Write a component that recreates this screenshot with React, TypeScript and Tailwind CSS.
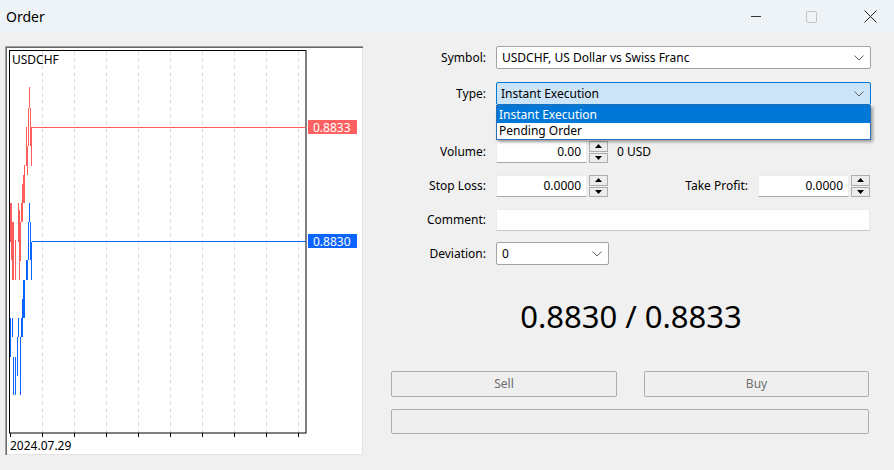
import React from "react";

const redBars: [number, number, number][] = [
  [29.5, 87, 108],
  [28.5, 108, 146],
  [30.5, 108, 146],
  [31.5, 127, 166],
  [26.5, 127, 166],
  [27.5, 146, 175],
  [24.5, 165, 203],
  [23.5, 175, 203],
  [22.5, 184, 222],
  [10.5, 203, 242],
  [11.5, 203, 260],
  [12.5, 222, 280],
  [13.5, 222, 280],
  [15.5, 240, 280],
  [18.5, 203, 242],
  [19.5, 210, 280],
  [20.5, 222, 261],
  [21.5, 203, 222],
];

const blueBars: [number, number, number][] = [
  [29.5, 203, 222],
  [28.5, 222, 260],
  [30.5, 222, 260],
  [31.5, 242, 280],
  [26.5, 260, 280],
  [27.5, 260, 280],
  [23.5, 280, 318],
  [24.5, 280, 318],
  [22.5, 299, 337],
  [10.5, 318, 357],
  [12.5, 318, 337],
  [18.5, 318, 337],
  [21.5, 318, 337],
  [17.5, 337, 376],
  [20.5, 337, 376],
  [13.5, 357, 395],
  [15.5, 357, 395],
  [20.5, 376, 395],
];

const gridX = [42.5, 74.5, 106.5, 138.5, 170.5, 202.5, 234.5, 266.5, 298.5];

function Chart() {
  return (
    <div className="relative w-[358px] h-[409px] bg-white shadow-[inset_1px_1px_0_#a0a0a0,inset_2px_2px_0_#696969,inset_-1px_-1px_0_#e3e3e3]">
      <svg width="358" height="409" viewBox="0 0 358 409" className="absolute inset-0">
        <g transform="translate(-5,-46)" fontFamily="'Noto Sans', 'Liberation Sans', sans-serif" fontSize="12">
          {gridX.map((x) => (
            <line key={x} x1={x} y1={51} x2={x} y2={433} stroke="#dcdcdc" strokeDasharray="4 3" />
          ))}
          {[10.5, ...gridX].map((x) => (
            <line key={"t" + x} x1={x} y1={433} x2={x} y2={437} stroke="#000" />
          ))}
          <rect x={9.5} y={50.5} width={296.5} height={382.5} fill="none" stroke="#000" />
          {redBars.map(([x, a, b], i) => (
            <line key={"r" + i} x1={x} y1={a} x2={x} y2={b} stroke="#ff5c5c" />
          ))}
          {blueBars.map(([x, a, b], i) => (
            <line key={"b" + i} x1={x} y1={a} x2={x} y2={b} stroke="#0a64ff" />
          ))}
          <line x1={32} y1={127.5} x2={306} y2={127.5} stroke="#ff5c5c" />
          <line x1={32} y1={241.5} x2={306} y2={241.5} stroke="#0a64ff" />
          <rect x={308} y={120} width={49} height={14} fill="#ff6161" />
          <text x={313} y={131.5} fill="#fff">0.8833</text>
          <rect x={308} y={234} width={49} height={14} fill="#0a64ff" />
          <text x={313} y={245.5} fill="#fff">0.8830</text>
          <text x={12} y={64} fill="#000">USDCHF</text>
          <text x={10} y={449.5} fill="#000">2024.07.29</text>
        </g>
      </svg>
    </div>
  );
}

function Chevron() {
  return (
    <svg width="10" height="6" viewBox="0 0 10 6" className="shrink-0">
      <path d="M0.5 0.5 L5 5 L9.5 0.5" fill="none" stroke="#606060" strokeWidth="1" />
    </svg>
  );
}

function Spin() {
  return (
    <div className="ml-[2px] flex h-[22px] w-[19px] flex-col gap-[1px]">
      <div className="flex flex-1 items-center justify-center border border-[#adadad] bg-[#ececec]">
        <svg width="7" height="4" viewBox="0 0 7 4">
          <path d="M0 4 L3.5 0 L7 4Z" fill="#000" />
        </svg>
      </div>
      <div className="flex flex-1 items-center justify-center border border-[#adadad] bg-[#ececec]">
        <svg width="7" height="4" viewBox="0 0 7 4">
          <path d="M0 0 L3.5 4 L7 0Z" fill="#000" />
        </svg>
      </div>
    </div>
  );
}

function Field({ value, className = "" }: { value: string; className?: string }) {
  return (
    <div
      className={
        "flex h-[22px] items-center justify-end border border-[#ececec] border-b-[#a8a8a8] bg-white pr-[5px] " +
        className
      }
    >
      {value}
    </div>
  );
}

function Label({ text }: { text: string }) {
  return <div className="w-[105px] shrink-0 pr-[10px] text-right">{text}</div>;
}

export default function App() {
  return (
    <div className="flex h-[470px] w-[894px] flex-col overflow-hidden bg-[#f0f0f0] font-['Noto_Sans','Liberation_Sans',sans-serif] text-[12px] text-black">
      <div className="flex h-[33px] items-center bg-[#eef3f7]">
        <div className="pl-[6px] text-[14px]">Order</div>
        <div className="ml-auto flex items-center">
          <div className="h-[1px] w-[10px] bg-[#333]" />
          <div className="ml-[45px] h-[12px] w-[11px] rounded-[2px] border border-[#c4c4c4]" />
          <svg width="13" height="13" viewBox="0 0 13 13" className="ml-[47px] mr-[17px]">
            <path d="M0.5 0.5 L12.5 12.5 M12.5 0.5 L0.5 12.5" stroke="#222" strokeWidth="1" />
          </svg>
        </div>
      </div>

      <div className="flex pt-[13px]">
        <div className="ml-[5px]">
          <Chart />
        </div>

        <div className="ml-[28px] flex w-[480px] flex-col">
          <div className="flex h-[23px] items-center">
            <Label text="Symbol:" />
            <div className="flex h-[23px] flex-1 items-center justify-between rounded-[2px] border border-[#a3a3a3] bg-white pl-[5px] pr-[6px]">
              <span>USDCHF, US Dollar vs Swiss Franc</span>
              <Chevron />
            </div>
          </div>

          <div className="mt-[13px] flex h-[23px] items-center">
            <Label text="Type:" />
            <div className="relative flex-1">
              <div className="flex h-[23px] items-center justify-between rounded-[2px] border border-[#0078d7] bg-[#cce4f7] pl-[4px] pr-[6px]">
                <span>Instant Execution</span>
                <Chevron />
              </div>
              <div className="absolute left-0 right-0 top-[23px] z-10 flex flex-col border border-[#2a6fb5] bg-white shadow-[2px_2px_3px_rgba(0,0,0,0.35)]">
                <div className="flex h-[17px] items-center bg-[#0078d7] pl-[2px] text-white">Instant Execution</div>
                <div className="flex h-[16px] items-center pl-[2px]">Pending Order</div>
              </div>
            </div>
          </div>

          <div className="mt-[36px] flex h-[22px] items-center">
            <Label text="Volume:" />
            <Field value="0.00" className="w-[91px]" />
            <Spin />
            <span className="ml-[9px]">0 USD</span>
          </div>

          <div className="mt-[12px] flex h-[22px] items-center">
            <Label text="Stop Loss:" />
            <Field value="0.0000" className="w-[91px]" />
            <Spin />
            <div className="flex-1 pr-[10px] text-right">Take Profit:</div>
            <Field value="0.0000" className="w-[91px]" />
            <Spin />
            <div className="w-[1px]" />
          </div>

          <div className="mt-[12px] flex h-[22px] items-center">
            <Label text="Comment:" />
            <div className="h-[22px] flex-1 border border-[#ececec] border-b-[#c8c8c8] bg-white" />
            <div className="w-[1px]" />
          </div>

          <div className="mt-[11px] flex h-[23px] items-center">
            <Label text="Deviation:" />
            <div className="flex h-[23px] w-[113px] items-center justify-between rounded-[2px] border border-[#a3a3a3] bg-white pl-[5px] pr-[6px]">
              <span>0</span>
              <Chevron />
            </div>
          </div>

          <div className="mt-[31px] h-[40px] text-center text-[31px] leading-[40px]">0.8830 / 0.8833</div>

          <div className="mt-[35px] flex">
            <button className="flex h-[26px] w-[226px] items-center justify-center rounded-[2px] border border-[#adadad] bg-[#efefef] text-[#6d6d6d]">
              Sell
            </button>
            <button className="ml-[27px] flex h-[26px] w-[225px] items-center justify-center rounded-[2px] border border-[#adadad] bg-[#efefef] text-[#6d6d6d]">
              Buy
            </button>
          </div>

          <div className="mt-[12px] h-[25px] w-[478px] rounded-[2px] border border-[#adadad] bg-[#efefef]" />
        </div>
      </div>
    </div>
  );
}
